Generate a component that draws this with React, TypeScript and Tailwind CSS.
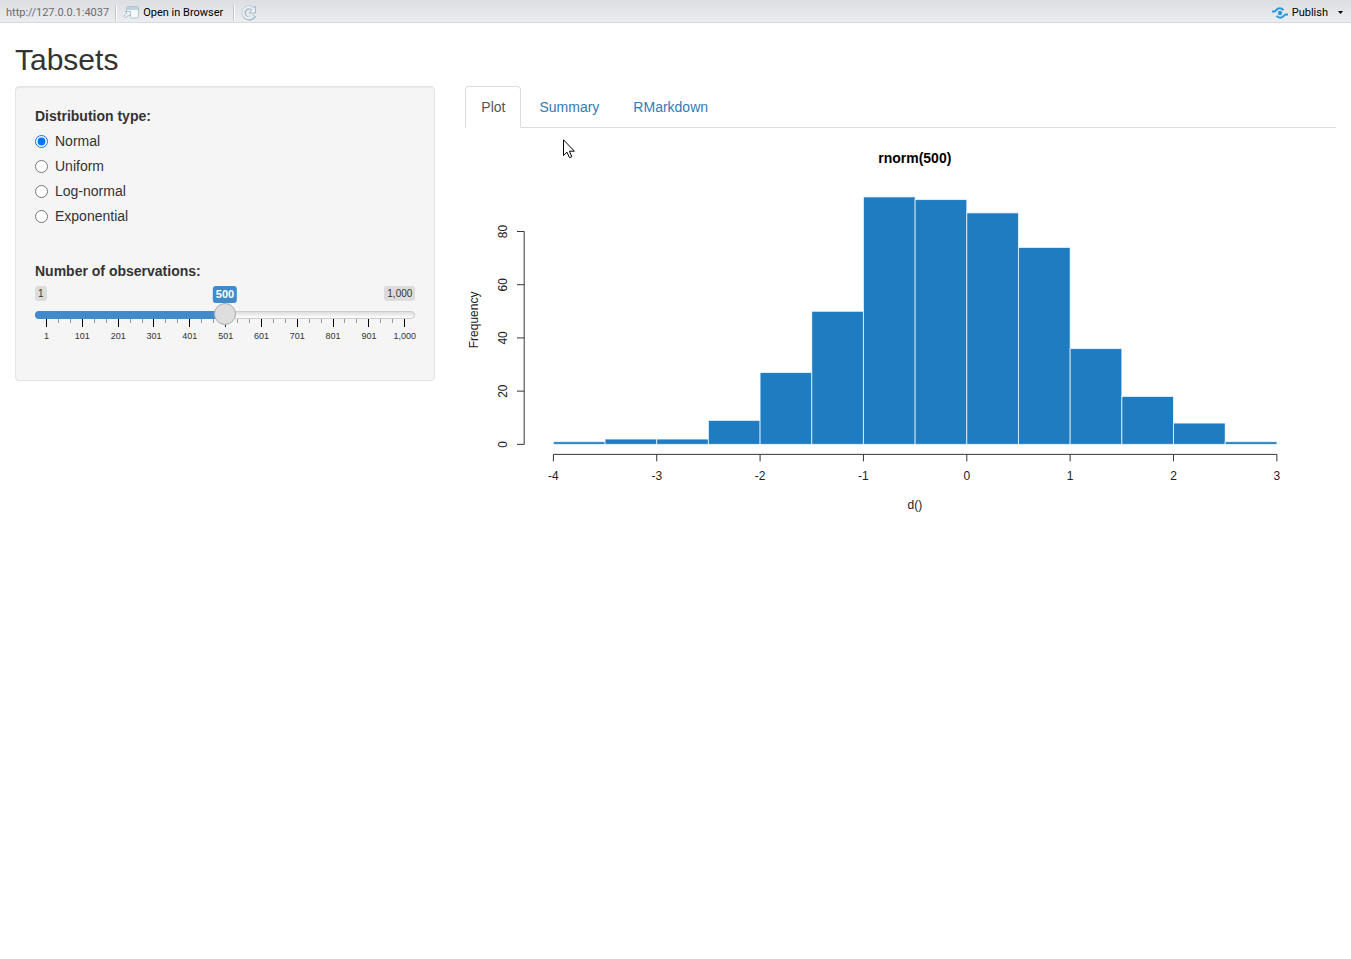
import { useState } from 'react';

const DISTRIBUTIONS = ['Normal', 'Uniform', 'Log-normal', 'Exponential'];
const TABS = ['Plot', 'Summary', 'RMarkdown'];

const MIN = 1;
const MAX = 1000;
const TICK_LABELS = ['1', '101', '201', '301', '401', '501', '601', '701', '801', '901', '1,000'];

// Counts per half-unit bin, starting at -4.
const COUNTS = [1, 2, 2, 9, 27, 50, 93, 92, 87, 74, 36, 18, 8, 1];

export default function App() {
  const [dist, setDist] = useState('Normal');
  const [n, setN] = useState(500);
  const [tab, setTab] = useState('Plot');

  return (
    <div className="min-h-screen bg-white font-['Liberation_Sans',Arial,sans-serif] text-sm/5 text-[#333333]">
      <Toolbar />
      <h2 className="mx-[15px] mt-5 mb-2.5 text-[30px]/[33px]">Tabsets</h2>
      <div className="flex items-start">
        <div className="w-1/3 px-[15px]">
          <form className="rounded border border-[#e3e3e3] bg-[#f5f5f5] px-[19px] pt-[19px] pb-[38px] shadow-[inset_0_1px_1px_rgba(0,0,0,0.05)]">
            <fieldset>
              <legend className="font-bold">Distribution type:</legend>
              {DISTRIBUTIONS.map((name) => (
                <label key={name} className="mt-[5px] flex items-center gap-[7px]">
                  <input
                    type="radio"
                    name="dist"
                    className="size-[13px]"
                    checked={dist === name}
                    onChange={() => setDist(name)}
                  />
                  {name}
                </label>
              ))}
            </fieldset>
            <label htmlFor="n" className="mt-[35px] block font-bold">
              Number of observations:
            </label>
            <Slider value={n} onChange={setN} />
          </form>
        </div>

        <main className="w-2/3 px-[15px]">
          <div role="tablist" className="flex gap-0.5 border-b border-[#dddddd]">
            {TABS.map((name) => (
              <button
                key={name}
                type="button"
                role="tab"
                aria-selected={tab === name}
                onClick={() => setTab(name)}
                className={`-mb-px rounded-t border px-[15px] py-2.5 ${
                  tab === name
                    ? 'border-[#dddddd] border-b-white bg-white text-[#555555]'
                    : 'border-transparent text-[#337ab7]'
                }`}
              >
                {name}
              </button>
            ))}
          </div>
          <div className="relative">
            <Histogram />
            <Pointer />
          </div>
        </main>
      </div>
    </div>
  );
}

function Toolbar() {
  return (
    <header className="flex h-[23px] items-center border-b border-[#d6dadc] bg-linear-to-b from-[#dddee2] to-[#ecedf0] pt-[3px] pr-2 pl-1.5 font-[Roboto,'Open_Sans',sans-serif] text-[11px]/4 text-black">
      <span className="text-[#6b6b6b]">http://127.0.0.1:4037</span>
      <Divider />
      <button type="button" className="flex items-center gap-1 pr-1">
        <WindowIcon />
        Open in Browser
      </button>
      <Divider />
      <button type="button" aria-label="Refresh">
        <RefreshIcon />
      </button>
      <button type="button" className="ml-auto flex items-center gap-1">
        <PublishIcon />
        Publish
        <svg viewBox="0 0 5 3" className="ml-1.5 h-[3px] w-[5px]">
          <path d="M0 0h5L2.500 3z" />
        </svg>
      </button>
    </header>
  );
}

function Divider() {
  return <span className="mx-1.5 h-4 w-0.5 border-r border-l border-r-white border-l-[#c3c5c9]" />;
}

function WindowIcon() {
  return (
    <svg viewBox="0 0 16 14" className="h-3.5 w-4" fill="none">
      <rect x="3.500" y=".5" width="12" height="11.500" rx="1.500" fill="#f6f9fb" stroke="#b0c3d1" />
      <path d="M4 1h11v3H4z" fill="#bdd2df" />
      <path d="M0 5h7.500v8H0z" fill="#e8eaed" />
      <path
        d="M2.500 5.500h5v5L5.700 8.800 2.500 12 .8 10.300 4 7.200z"
        fill="#f6f8fa"
        stroke="#a6b5c1"
        strokeWidth=".9"
      />
    </svg>
  );
}

function RefreshIcon() {
  return (
    <svg viewBox="0 0 16 16" className="size-4" fill="none">
      <path d="M13.400 10.500A5.600 5.600 0 1 1 11.800 3.600" stroke="#a9bac7" strokeWidth="4" />
      <path d="M14.500 1v7H8z" fill="#eaf1f5" stroke="#a9bac7" />
      <path d="M12.600 10.700A5.600 5.600 0 1 1 12.300 4.200" stroke="#eaf1f5" strokeWidth="2.200" />
    </svg>
  );
}

function PublishIcon() {
  return (
    <svg viewBox="0 0 16 12" className="h-3 w-4" fill="none" stroke="#2b98dc" strokeWidth="2">
      <circle cx="8" cy="6" r="2.200" fill="#2b98dc" stroke="none" />
      <path d="M0 4.500h2.300C4 4.500 4.200 1.200 7.600 1.200c1.800 0 3 .7 3.900 2" />
      <path d="M16 7.500h-2.300c-1.700 0-1.900 3.300-5.300 3.300-1.800 0-3-.7-3.900-2" />
    </svg>
  );
}

// The handle is 22px wide, so its centre runs from 11px to 100% - 11px.
function Slider({ value, onChange }: { value: number; onChange: (n: number) => void }) {
  const ratio = (value - MIN) / (MAX - MIN);
  const center = `calc(11px + (100% - 22px) * ${ratio})`;

  return (
    <div className="mt-[5px]">
      <div className="relative flex h-[25px] items-start justify-between text-[10px]/[13px]">
        <span className="rounded-[3px] bg-black/10 px-[3px] py-px">1</span>
        <span
          className="absolute top-0 -translate-x-1/2 rounded-[3px] bg-[#428bca] px-[3px] py-px text-[11px]/[15px] font-bold text-white"
          style={{ left: center }}
        >
          {value}
        </span>
        <span className="rounded-[3px] bg-black/10 px-[3px] py-px">1,000</span>
      </div>
      <div className="relative h-2 rounded-lg border border-[#cccccc] bg-linear-to-b from-[#dddddd] to-white">
        <div
          className="absolute -top-px -left-px h-2 rounded-l-lg bg-[#428bca]"
          style={{ width: center }}
        />
        <input
          id="n"
          type="range"
          min={MIN}
          max={MAX}
          value={value}
          onChange={(e) => onChange(Number(e.target.value))}
          className="absolute -inset-x-px -top-[9px] h-[22px] w-[calc(100%+2px)] appearance-none bg-transparent [&::-webkit-slider-thumb]:size-[22px] [&::-webkit-slider-thumb]:appearance-none [&::-webkit-slider-thumb]:rounded-full [&::-webkit-slider-thumb]:border [&::-webkit-slider-thumb]:border-[#ababab] [&::-webkit-slider-thumb]:bg-[#dedede] [&::-webkit-slider-thumb]:shadow-[1px_1px_3px_rgba(255,255,255,0.3)]"
        />
      </div>
      <div className="flex justify-between pr-2.5 pl-[11px]">
        {Array.from({ length: 31 }, (_, i) => (
          <span key={i} className={i % 3 === 0 ? 'h-2 w-px bg-black' : 'h-1 w-px bg-[#999999]'} />
        ))}
      </div>
      <div className="mt-[3px] flex justify-between pr-2.5 pl-[11px] text-[9px]/[12px]">
        {TICK_LABELS.map((label) => (
          <span key={label} className="flex w-px justify-center">
            {label}
          </span>
        ))}
      </div>
    </div>
  );
}

function Histogram() {
  const x = (v: number) => 502 + v * 103.4;
  const y = (v: number) => 316.5 - v * 2.662;

  return (
    <svg
      viewBox="0 0 871 400"
      role="img"
      aria-label="Histogram of rnorm(500)"
      className="w-full font-['Liberation_Sans',Arial,sans-serif] text-[12px]"
      textAnchor="middle"
    >
      <text x="450" y="35" className="text-[14px] font-bold">
        rnorm(500)
      </text>
      {COUNTS.map((count, i) => (
        <rect
          key={i}
          x={x(-4 + i / 2)}
          y={y(count)}
          width={51.7}
          height={y(0) - y(count)}
          fill="#1f7cc1"
          stroke="#ffffff"
          strokeOpacity=".7"
        />
      ))}

      <g stroke="#333333">
        <path d={`M${x(-4)} 326.500H${x(3)}`} />
        {[-4, -3, -2, -1, 0, 1, 2, 3].map((v) => (
          <path key={v} d={`M${x(v)} 326.500v7`} />
        ))}
        <path d={`M59.200 ${y(0)}V${y(80)}`} />
        {[0, 20, 40, 60, 80].map((v) => (
          <path key={v} d={`M59.200 ${y(v)}h-7.200`} />
        ))}
      </g>

      <g fill="#222222">
        {[-4, -3, -2, -1, 0, 1, 2, 3].map((v) => (
          <text key={v} x={x(v)} y="352">
            {v}
          </text>
        ))}
        {[0, 20, 40, 60, 80].map((v) => (
          <text key={v} transform={`translate(42 ${y(v)}) rotate(-90)`}>
            {v}
          </text>
        ))}
        <text x="450" y="381">
          d()
        </text>
        <text transform="translate(13 192) rotate(-90)">Frequency</text>
      </g>
    </svg>
  );
}

function Pointer() {
  return (
    <svg viewBox="0 0 13 20" className="pointer-events-none absolute top-[11px] left-[98px] h-5 w-[13px]">
      <path
        d="M.5.8v15.700l3.500-3.300 2.500 5.500 2.300-1-2.400-5.500h5z"
        fill="#ffffff"
        stroke="#000000"
      />
    </svg>
  );
}
